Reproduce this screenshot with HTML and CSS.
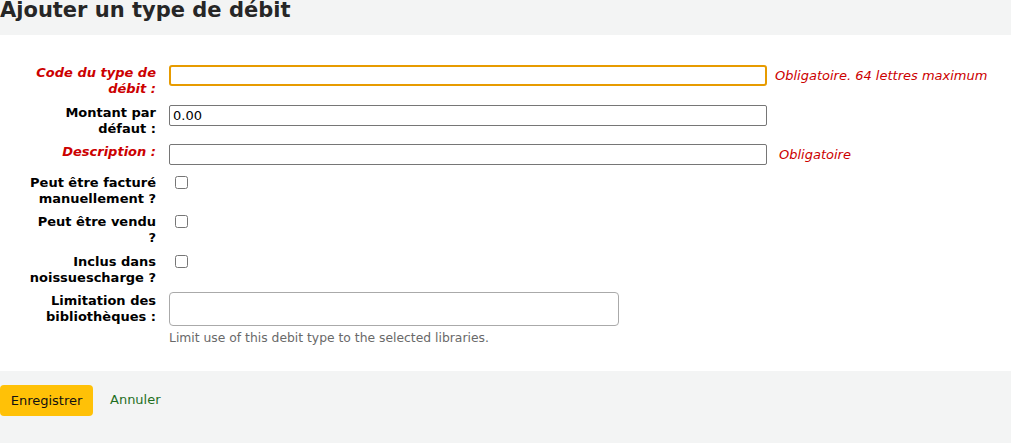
FILE: index.html
```html
<!DOCTYPE html>
<html lang="fr">
<head>
<meta charset="utf-8">
<title>Ajouter un type de débit</title>
<link rel="stylesheet" href="styles.css">
</head>
<body>
<header class="page-head">
  <h1>Ajouter un type de débit</h1>
</header>
<form class="debit-form">
  <fieldset class="rows">
    <ol>
      <li class="row">
        <label class="field-label required" for="code">Code du type de débit :</label>
        <div class="control inline">
          <input class="text-input focused" type="text" id="code">
          <span class="req req-first">Obligatoire. 64 lettres maximum</span>
        </div>
      </li>
      <li class="row">
        <label class="field-label" for="amount">Montant par défaut :</label>
        <div class="control inline">
          <input class="text-input" type="text" id="amount" value="0.00">
        </div>
      </li>
      <li class="row">
        <label class="field-label required" for="desc">Description :</label>
        <div class="control inline">
          <input class="text-input" type="text" id="desc">
          <span class="req">Obligatoire</span>
        </div>
      </li>
      <li class="row">
        <label class="field-label" for="manual">Peut être facturé manuellement ?</label>
        <div class="control"><input class="check" type="checkbox" id="manual"></div>
      </li>
      <li class="row">
        <label class="field-label" for="sold">Peut être vendu ?</label>
        <div class="control"><input class="check" type="checkbox" id="sold"></div>
      </li>
      <li class="row">
        <label class="field-label" for="noissue">Inclus dans noissuescharge ?</label>
        <div class="control"><input class="check" type="checkbox" id="noissue"></div>
      </li>
      <li class="row">
        <label class="field-label" for="libs">Limitation des bibliothèques :</label>
        <div class="control stack">
          <div class="multi-select" id="libs"></div>
          <div class="hint">Limit use of this debit type to the selected libraries.</div>
        </div>
      </li>
    </ol>
  </fieldset>
  <fieldset class="action">
    <button type="button" class="btn-save">Enregistrer</button>
    <a class="cancel" href="#">Annuler</a>
  </fieldset>
</form>
</body>
</html>
```

FILE: styles.css
```css
html, body {
  margin: 0;
  padding: 0;
}

body {
  background: #f3f4f4;
  font-family: "DejaVu Sans", "Liberation Sans", sans-serif;
  font-size: 13px;
  color: #000;
}

.page-head {
  height: 35px;
  background: #f3f4f4;
}

.page-head h1 {
  margin: 0;
  font-size: 21px;
  line-height: 21px;
  font-weight: bold;
  color: #262626;
}

.debit-form {
  margin: 0;
}

fieldset {
  margin: 0;
  border: 0;
  padding: 0;
  min-width: 0;
}

.rows {
  background: #fff;
  padding: 25px 0 21px 0;
}

.rows ol {
  list-style: none;
  margin: 0;
  padding: 0;
}

.row {
  display: flex;
  align-items: flex-start;
  padding: 4px 0 3.5px 0;
}

.field-label {
  flex: none;
  width: 128px;
  margin-left: 28px;
  margin-right: 13px;
  padding-top: 1px;
  margin-bottom: -1px;
  text-align: right;
  font-weight: bold;
  line-height: 16px;
}

.field-label.required {
  color: #cc0000;
  font-style: italic;
}

.control {
  display: flex;
}

.control.inline {
  align-items: center;
}

.control.stack {
  flex-direction: column;
}

.text-input {
  box-sizing: border-box;
  width: 598px;
  height: 21px;
  margin: 1px 0;
  padding: 0 3px;
  border: 1px solid #767676;
  border-radius: 2px;
  font-family: "DejaVu Sans", sans-serif;
  font-size: 13px;
  color: #000;
  background: #fff;
  outline: none;
}

.text-input.focused {
  border: 2px solid #e79b00;
  border-radius: 3px;
  padding: 0 2px;
}

.req {
  color: #cc0000;
  font-style: italic;
  margin-left: 12px;
}

.req.req-first {
  margin-left: 8px;
}

.check {
  width: 13px;
  height: 13px;
  margin: 2px 0 0 6px;
}

.multi-select {
  box-sizing: border-box;
  width: 450px;
  height: 34px;
  border: 1px solid #aaa;
  border-radius: 4px;
  background: #fff;
}

.hint {
  margin-top: 4px;
  font-size: 12.35px;
  line-height: 16px;
  color: #696969;
}

.action {
  display: flex;
  align-items: center;
  padding: 14px 0 0 0;
}

.btn-save {
  box-sizing: border-box;
  height: 31px;
  width: 93px;
  padding: 0;
  border: 0;
  border-radius: 4px;
  background: #ffc107;
  font-family: "DejaVu Sans", sans-serif;
  font-size: 13px;
  color: #111;
}

.cancel {
  margin-left: 17px;
  color: #1f6f1f;
  text-decoration: none;
  font-size: 13px;
  margin-top: -2px;
}
```
